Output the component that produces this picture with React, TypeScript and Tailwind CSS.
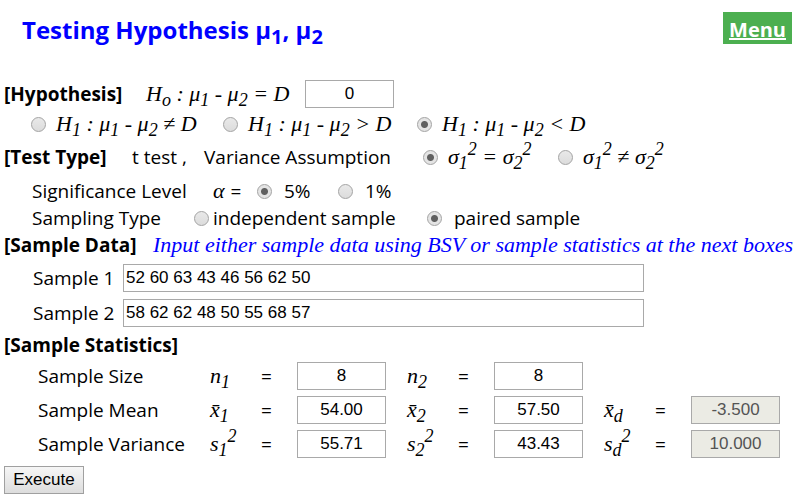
import { useState, type ReactNode } from "react";

const SERIF = "font-['Liberation_Serif','Times_New_Roman',serif]";

function MathText({ children, className = "" }: { children: ReactNode; className?: string }) {
  return <span className={`${SERIF} text-[22px] leading-7 italic whitespace-nowrap ${className}`}>{children}</span>;
}

function Sub({ children }: { children: ReactNode }) {
  return <sub className="text-[18px]">{children}</sub>;
}

function Sup({ children }: { children: ReactNode }) {
  return <sup className="text-[18px]">{children}</sup>;
}

type RadioProps = {
  name: string;
  value: string;
  initial?: boolean;
  className?: string;
  children: ReactNode;
};

function Radio({ name, value, initial = false, className = "gap-2.5", children }: RadioProps) {
  return (
    <label className={`flex items-center whitespace-nowrap ${className}`}>
      <input
        type="radio"
        name={name}
        value={value}
        defaultChecked={initial}
        className="size-[15px] shrink-0 appearance-none rounded-full border border-[#a3a3a3] bg-linear-to-b from-[#e9e9e9] to-[#dcdcdc] checked:bg-[radial-gradient(circle,#606060_0_3px,#e4e4e4_4px)]"
      />
      {children}
    </label>
  );
}

type NumberBoxProps = { label: string; initial: string; disabled?: boolean };

function NumberBox({ label, initial, disabled = false }: NumberBoxProps) {
  const [value, setValue] = useState(initial);
  return (
    <input
      type="text"
      aria-label={label}
      value={value}
      disabled={disabled}
      onChange={(e) => setValue(e.target.value)}
      className="h-7 w-[89px] border border-[#a9a9a9] bg-white text-center font-['Liberation_Sans',Arial,sans-serif] text-[17px] text-black disabled:bg-[#ebebe4] disabled:text-[#545454]"
    />
  );
}

function SampleRow({ id, label, initial }: { id: string; label: string; initial: string }) {
  return (
    <div className="flex h-[35px] items-center pl-[29px]">
      <label htmlFor={id} className="w-[90px] shrink-0 whitespace-nowrap">
        {label}
      </label>
      <input
        id={id}
        type="text"
        defaultValue={initial}
        className="h-7 w-full max-w-[521px] border border-[#a9a9a9] bg-white px-0.5 font-['Liberation_Sans',Arial,sans-serif] text-[17px]"
      />
    </div>
  );
}

function Statistic({ symbol, children }: { symbol: ReactNode; children: ReactNode }) {
  return (
    <>
      <MathText>{symbol}</MathText>
      <span>=</span>
      {children}
    </>
  );
}

export default function App() {
  return (
    <main className="bg-white px-1 pt-3 pb-2 font-['Open_Sans','Noto_Sans',sans-serif] text-[19px] leading-7 text-black">
      <header className="flex h-[66px] items-start justify-between pr-0.5 pl-[18px]">
        <h1 className="text-2xl leading-9 font-bold whitespace-nowrap text-[#0000ff]">
          Testing Hypothesis μ<sub className="text-[20px]">1</sub>, μ<sub className="text-[20px]">2</sub>
        </h1>
        <a href="#menu" className="bg-[#4caf50] px-1.5 pt-1 text-[20px] leading-7 font-bold text-white underline">
          Menu
        </a>
      </header>

      <form onSubmit={(e) => e.preventDefault()}>
        <div className="flex h-8 items-center">
          <h2 className="w-[142px] font-bold whitespace-nowrap">[Hypothesis]</h2>
          <MathText className="w-[159px]">
            H<Sub>o</Sub> : μ<Sub>1</Sub> - μ<Sub>2</Sub> = D
          </MathText>
          <NumberBox label="D" initial="0" />
        </div>

        <div className="flex h-7 items-center pl-[27px]">
          <div className="w-48">
            <Radio name="alternative" value="ne">
              <MathText>
                H<Sub>1</Sub> : μ<Sub>1</Sub> - μ<Sub>2</Sub> ≠ D
              </MathText>
            </Radio>
          </div>
          <div className="w-[194px]">
            <Radio name="alternative" value="gt">
              <MathText>
                H<Sub>1</Sub> : μ<Sub>1</Sub> - μ<Sub>2</Sub> &gt; D
              </MathText>
            </Radio>
          </div>
          <Radio name="alternative" value="lt" initial>
            <MathText>
              H<Sub>1</Sub> : μ<Sub>1</Sub> - μ<Sub>2</Sub> &lt; D
            </MathText>
          </Radio>
        </div>

        <div className="flex h-[38px] items-center">
          <h2 className="w-32 font-bold whitespace-nowrap">[Test Type]</h2>
          <span className="w-[72px] whitespace-nowrap">t test ,</span>
          <span className="w-[219px] whitespace-nowrap">Variance Assumption</span>
          <div className="w-[135px]">
            <Radio name="variance" value="equal" initial>
              <MathText>
                σ<Sub>1</Sub>
                <Sup>2</Sup> = σ<Sub>2</Sub>
                <Sup>2</Sup>
              </MathText>
            </Radio>
          </div>
          <Radio name="variance" value="unequal">
            <MathText>
              σ<Sub>1</Sub>
              <Sup>2</Sup> ≠ σ<Sub>2</Sub>
              <Sup>2</Sup>
            </MathText>
          </Radio>
        </div>

        <div className="flex h-[30px] items-center pl-7">
          <span className="w-[181px] whitespace-nowrap">Significance Level</span>
          <span className="flex w-11 items-center gap-1.5">
            <MathText>α</MathText>
            <span>=</span>
          </span>
          <div className="w-[81px]">
            <Radio name="alpha" value="5" initial className="gap-3">
              5%
            </Radio>
          </div>
          <Radio name="alpha" value="1" className="gap-3">
            1%
          </Radio>
        </div>

        <div className="flex h-6 items-center pl-7">
          <span className="w-[162px] whitespace-nowrap">Sampling Type</span>
          <div className="w-[233px]">
            <Radio name="sampling" value="independent" className="gap-1">
              independent sample
            </Radio>
          </div>
          <Radio name="sampling" value="paired" initial className="gap-3">
            paired sample
          </Radio>
        </div>

        <div className="flex h-[30px] items-center">
          <h2 className="w-[149px] font-bold whitespace-nowrap">[Sample Data]</h2>
          <p className={`${SERIF} text-[22px] whitespace-nowrap text-[#0000ff] italic`}>
            Input either sample data using BSV or sample statistics at the next boxes
          </p>
        </div>

        <SampleRow id="sample-1" label="Sample 1" initial="52 60 63 43 46 56 62 50" />
        <SampleRow id="sample-2" label="Sample 2" initial="58 62 62 48 50 55 68 57" />

        <h2 className="pt-px font-bold">[Sample Statistics]</h2>

        <div className="grid auto-rows-[34px] grid-cols-[172px_51px_36px_110px_51px_36px_110px_51px_36px_89px] items-center pl-[34px]">
          <span>Sample Size</span>
          <Statistic symbol={<>n<Sub>1</Sub></>}>
            <NumberBox label="Sample size 1" initial="8" />
          </Statistic>
          <Statistic symbol={<>n<Sub>2</Sub></>}>
            <NumberBox label="Sample size 2" initial="8" />
          </Statistic>

          <span className="col-start-1">Sample Mean</span>
          <Statistic symbol={<>x̄<Sub>1</Sub></>}>
            <NumberBox label="Sample mean 1" initial="54.00" />
          </Statistic>
          <Statistic symbol={<>x̄<Sub>2</Sub></>}>
            <NumberBox label="Sample mean 2" initial="57.50" />
          </Statistic>
          <Statistic symbol={<>x̄<Sub>d</Sub></>}>
            <NumberBox label="Mean of differences" initial="-3.500" disabled />
          </Statistic>

          <span className="col-start-1">Sample Variance</span>
          <Statistic symbol={<>s<Sub>1</Sub><Sup>2</Sup></>}>
            <NumberBox label="Sample variance 1" initial="55.71" />
          </Statistic>
          <Statistic symbol={<>s<Sub>2</Sub><Sup>2</Sup></>}>
            <NumberBox label="Sample variance 2" initial="43.43" />
          </Statistic>
          <Statistic symbol={<>s<Sub>d</Sub><Sup>2</Sup></>}>
            <NumberBox label="Variance of differences" initial="10.000" disabled />
          </Statistic>
        </div>

        <button
          type="submit"
          className="mt-[5px] h-7 w-20 border border-[#a0a0a0] bg-linear-to-b from-[#f6f6f6] to-[#dddddd] font-['Liberation_Sans',Arial,sans-serif] text-[17px] leading-6"
        >
          Execute
        </button>
      </form>
    </main>
  );
}
